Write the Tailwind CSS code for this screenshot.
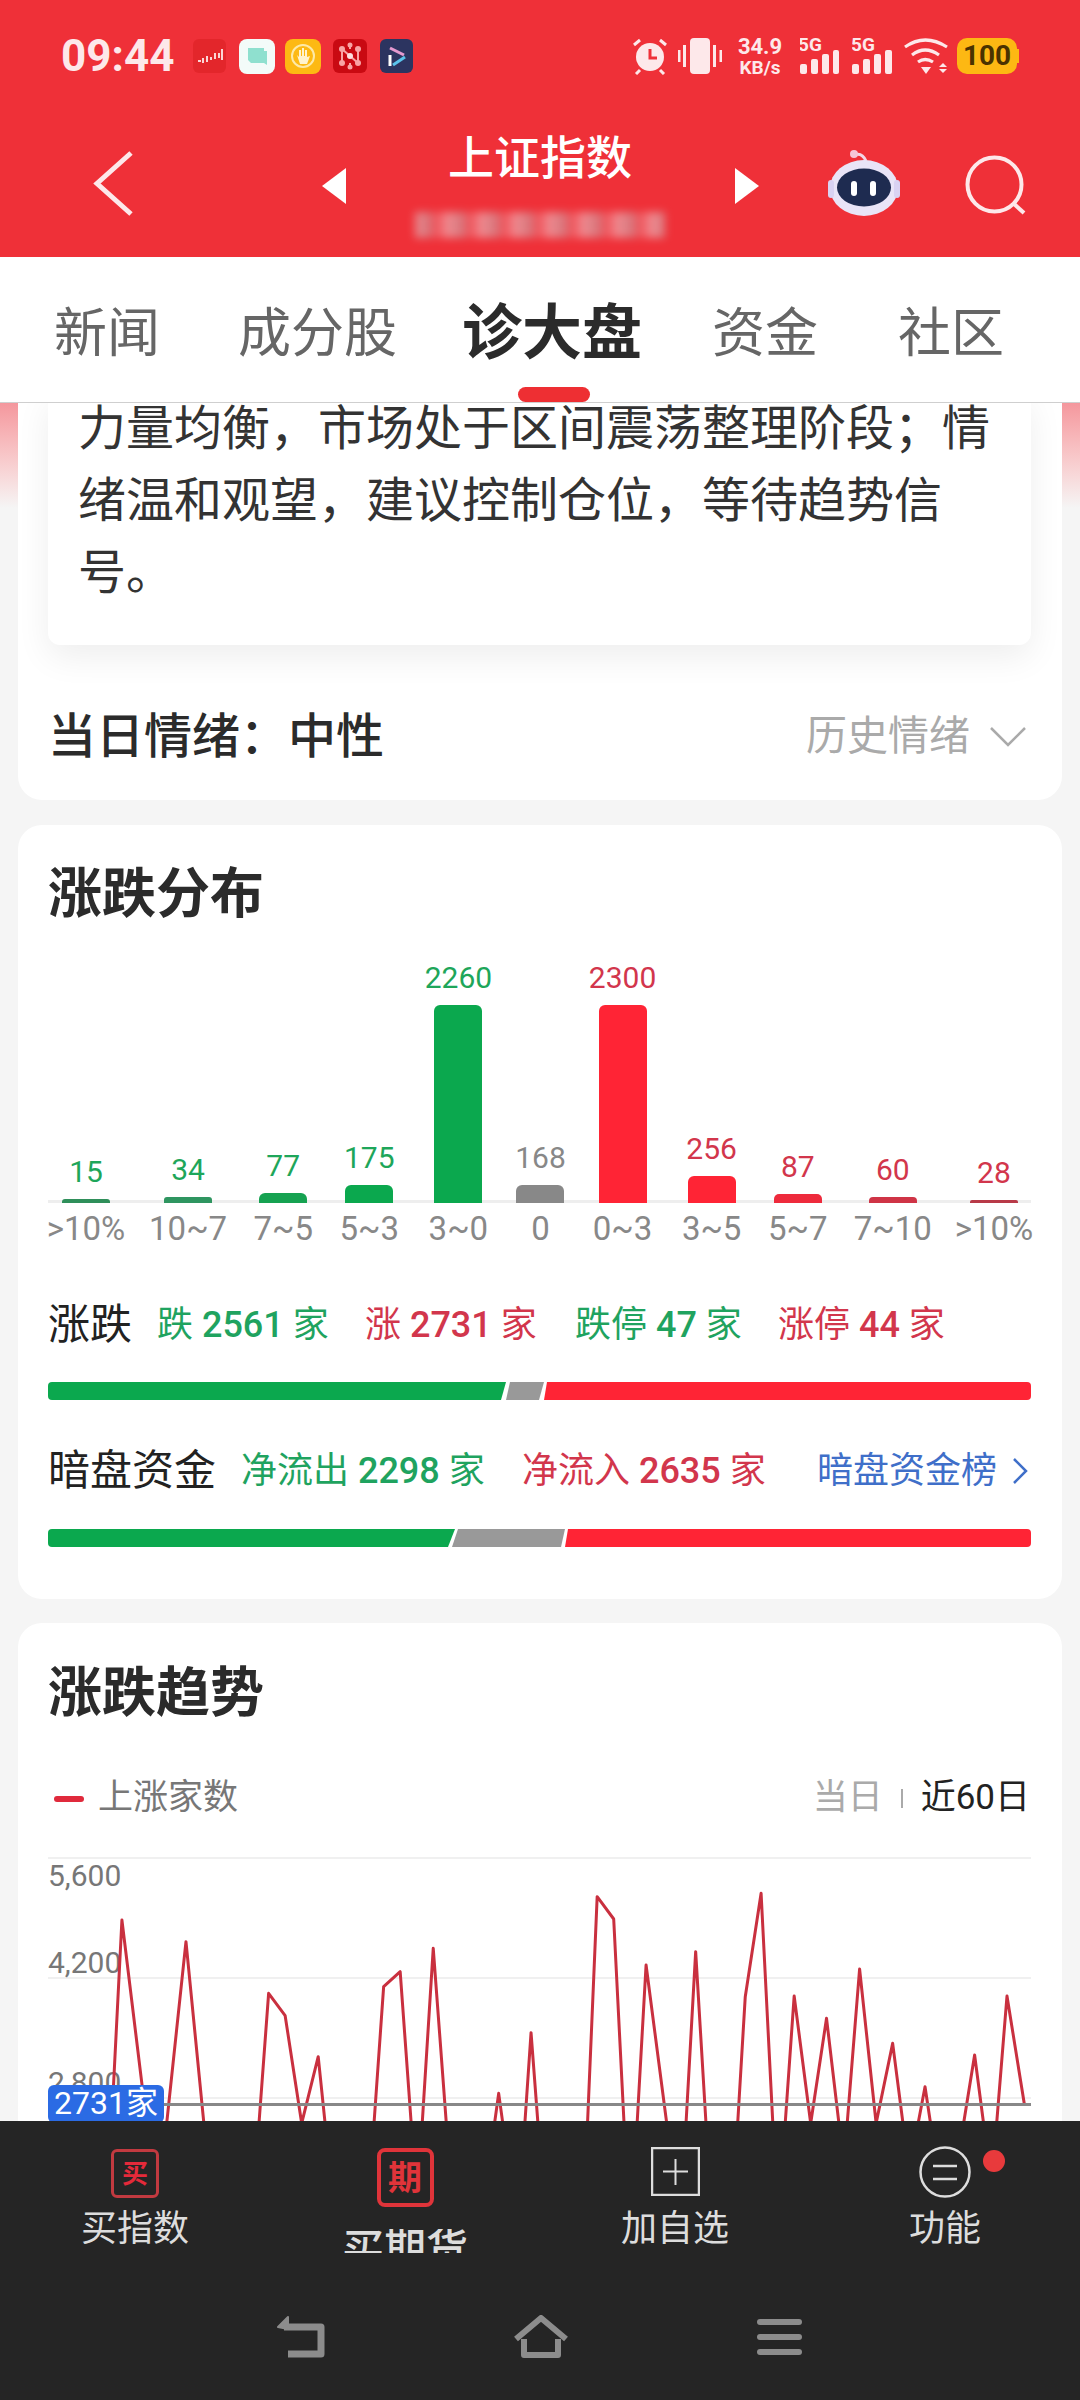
<!DOCTYPE html>
<html lang="zh"><head><meta charset="utf-8">
<script src="https://cdn.jsdelivr.net/npm/@tailwindcss/browser@4"></script>
</head>
<body class="m-0">
<div class="w-[1080px] h-[2400px] flex flex-col overflow-hidden bg-[#f5f5f5] text-[#2b2b2b] font-['Roboto','Noto_Sans_CJK_SC',sans-serif]">

<!-- header -->
<header class="h-[257px] shrink-0 bg-[#ef3038] flex flex-col text-[#fde8ea]">
  <div class="h-[78px] pt-[38px] pl-[61px] pr-[61px] flex justify-between items-start">
    <div class="flex items-center h-[36px]">
      <span class="text-[44px] leading-[36px] font-bold w-[132px]">09:44</span>
      <svg width="33" height="34" viewBox="0 0 33 34"><rect width="33" height="34" rx="6" fill="#e3262b"/><path d="M5 22h3M10 19v5M14 17v6M18 18v3M22 14v6M26 14v5M29 10v11" stroke="#fbd5d5" stroke-width="2"/></svg>
      <svg class="ml-[13px]" width="36" height="35" viewBox="0 0 36 35"><rect width="36" height="35" rx="8" fill="#f3fbf9"/><path d="M9 9h16v3h3v14l-3-2H12l-3-3z" fill="#8fe0cf"/></svg>
      <svg class="ml-[10px]" width="36" height="35" viewBox="0 0 36 35"><rect width="36" height="35" rx="8" fill="#fdb913"/><circle cx="18" cy="17" r="11" fill="none" stroke="#fde9a8" stroke-width="2"/><path d="M12 16l3 9h7l3-8-3 1v-7h-2v6h-1V9h-2v8h-1v-6h-2v7z" fill="#fff3cf"/></svg>
      <svg class="ml-[12px]" width="34" height="34" viewBox="0 0 34 34"><rect width="34" height="34" rx="6" fill="#c90a12"/><path d="M9 10v14M9 10l16 14M25 10v14M17 6v4M17 24v4" stroke="#f9a4a4" stroke-width="2"/><circle cx="9" cy="10" r="3" fill="#f9a4a4"/><circle cx="9" cy="24" r="3" fill="#f9a4a4"/><circle cx="25" cy="10" r="3" fill="#f9a4a4"/><circle cx="25" cy="24" r="3" fill="#f9a4a4"/><circle cx="17" cy="17" r="3" fill="#fde0e0"/><circle cx="17" cy="6" r="2.5" fill="#f9a4a4"/><circle cx="17" cy="28" r="2.5" fill="#f9a4a4"/></svg>
      <svg class="ml-[13px]" width="33" height="34" viewBox="0 0 33 34"><rect width="33" height="34" rx="6" fill="#2c3460"/><path d="M10 9l14 7" stroke="#e59ad0" stroke-width="3"/><path d="M10 16v11" stroke="#fff" stroke-width="3"/><path d="M13 26l12-8" stroke="#5ac4ec" stroke-width="3"/></svg>
    </div>
    <div class="flex items-start h-[37px] w-[387px] text-[#fde8ea]">
      <svg width="36" height="37" viewBox="0 0 36 37" fill="#fde8ea"><circle cx="18" cy="19" r="14"/><path d="M18 11v9h7" fill="none" stroke="#ef3038" stroke-width="3"/><path d="M2 7l6-5M34 7l-6-5M8 32l-4 4M28 32l4 4" stroke="#fde8ea" stroke-width="3" fill="none"/></svg>
      <svg class="ml-[10px]" width="44" height="36" viewBox="0 0 44 36" fill="#fde8ea"><rect x="12" width="20" height="36" rx="4"/><rect y="12" width="2.5" height="12"/><rect x="5" y="7" width="3" height="22"/><rect x="35" y="7" width="3" height="22"/><rect x="41.5" y="12" width="2.5" height="12"/></svg>
      <div class="ml-[15px] w-[46px] flex flex-col items-center font-bold"><span class="text-[22px] leading-[18px]">34.9</span><span class="text-[19px] leading-[19px] mt-[2px]">KB/s</span></div>
      <svg class="ml-[17px]" width="40" height="36" viewBox="0 0 40 36" fill="#fde8ea"><text x="-2" y="13" font-size="19" font-weight="700" font-family="Roboto">5G</text><rect y="26" width="7" height="10" rx="2"/><rect x="11" y="21" width="7" height="15" rx="2"/><rect x="22" y="16" width="7" height="20" rx="2"/><rect x="33" y="12" width="6" height="24" rx="2"/></svg>
      <svg class="ml-[12px]" width="42" height="36" viewBox="0 0 42 36" fill="#fde8ea"><text x="-1" y="13" font-size="19" font-weight="700" font-family="Roboto">5G</text><rect y="26" width="7" height="10" rx="2"/><rect x="11" y="21" width="7" height="15" rx="2"/><rect x="22" y="16" width="7" height="20" rx="2"/><rect x="33" y="12" width="7" height="24" rx="2"/></svg>
      <svg class="ml-[10px]" width="44" height="37" viewBox="0 0 44 37" fill="none" stroke="#fde8ea" stroke-width="3.2"><path d="M1 9Q21-5 43 9"/><path d="M8 17Q21 7 35 17"/><path d="M14 24Q21 19 29 24"/><path d="M17 29h10l-5 7z" fill="#fde8ea" stroke="none"/><path d="M35 29l4-4 4 4zM35 31l4 4 4-4z" fill="#fde8ea" stroke="none"/></svg>
      <div class="ml-[9px] flex items-center h-[36px]"><div class="w-[60px] h-[36px] rounded-[10px] bg-[#fdb813] text-[#4a3200] font-bold text-[28px] leading-[36px] text-center">100</div><div class="w-[2px] h-[14px] bg-[#fdb813]"></div></div>
    </div>
  </div>
  <div class="relative flex-1">
    <svg class="absolute left-0 top-0" width="1080" height="179" viewBox="0 78 1080 179" fill="none">
      <path d="M131 153L97 183.500L131 214" stroke="#fde8ea" stroke-width="5"/>
      <path d="M346 168V204L322 186z" fill="#fff"/>
      <path d="M735 168V204L759 186z" fill="#fff"/>
      <path d="M854 155q8-3 12 6" stroke="#f3d6e6" stroke-width="3"/><circle cx="854" cy="154" r="4" fill="#f6c6d8"/>
      <ellipse cx="864" cy="188" rx="34" ry="28" fill="#e9e4f7"/><rect x="828" y="180" width="6" height="18" rx="3" fill="#d9d2f2"/><rect x="894" y="180" width="6" height="18" rx="3" fill="#d9d2f2"/>
      <ellipse cx="864" cy="187.500" rx="27" ry="19" fill="#1e2b50"/>
      <rect x="851" y="181" width="6" height="15" rx="3" fill="#fff"/><rect x="870" y="181" width="6" height="15" rx="3" fill="#fff"/>
      <circle cx="994.500" cy="184.500" r="27" stroke="#fde8ea" stroke-width="4"/><path d="M1013 203l11 10" stroke="#fde8ea" stroke-width="4"/>
    </svg>
    <div class="pt-[50px] text-center text-white text-[46px] leading-[60px] font-medium">上证指数</div>
    <div class="mx-auto mt-[24px] w-[250px] h-[26px] blur-[4px] opacity-60 bg-[repeating-linear-gradient(90deg,#e8c4c8_0px,#c9a3a8_13px,#f2656c_21px,#f0d0d4_34px)]"></div>
  </div>
</header>

<!-- tabs -->
<nav class="relative h-[146px] shrink-0 bg-white border-b border-[#cfcfcf] flex items-center pl-[54px] pt-[8px] text-[#666] text-[53px] leading-[60px]">
  <span>新闻</span>
  <span class="ml-[78px]">成分股</span>
  <span class="ml-[65px] text-[60px] font-bold text-[#2b2b2b]">诊大盘</span>
  <span class="ml-[70px]">资金</span>
  <span class="ml-[80px]">社区</span>
  <div class="absolute left-[518px] bottom-0 w-[72px] h-[15px] rounded-[8px] bg-[#ee2f33]"></div>
</nav>

<!-- scrolling content -->
<main class="relative flex-1 overflow-hidden">
  <div class="absolute left-0 top-0 w-full h-[105px] bg-gradient-to-b from-[#f4979d] to-[#f5f5f5]"></div>

  <section class="relative mx-[18px] -mt-[10px] rounded-b-[24px] bg-white pb-[34px]">
    <div class="ml-[30px] mr-[31px] pl-[30px] pr-[30px] pb-[36px] rounded-b-[12px] bg-white shadow-[0_12px_34px_rgba(0,0,0,0.07)] text-[48px] leading-[72px] text-[#333]">力量均衡，市场处于区间震荡整理阶段；情绪温和观望，建议控制仓位，等待趋势信号。</div>
    <div class="mt-[63px] h-[58px] ml-[30px] mr-[34px] flex items-center justify-between">
      <span class="text-[48px] leading-[58px] font-medium">当日情绪：中性</span>
      <span class="flex items-center text-[#aaa] text-[41px] pr-[2px]">历史情绪<svg class="ml-[20px]" width="36" height="20" viewBox="0 0 36 20" fill="none"><path d="M1 1l17 17L35 1" stroke="#aaa" stroke-width="2.500"/></svg></span>
    </div>
  </section>

  <section class="relative mx-[18px] mt-[25px] rounded-[24px] bg-white pl-[30px] pr-[31px] pt-[40px] pb-[52px]">
    <h2 class="text-[54px] leading-[60px] font-bold">涨跌分布</h2>
    <div class="relative mt-[35px] h-[284px] flex justify-between items-end">
      <div class="absolute left-0 right-0 bottom-[41px] h-[3px] bg-[#eeeeee]"></div>
      <div class="relative w-[76px] flex flex-col items-center"><div class="w-0 flex justify-center text-[30px] leading-[30px] text-[#1ea65a] mb-[12px]">15</div><div class="w-[48px] h-[4px] rounded-t-[3px] bg-[#2f8f5a]"></div><div class="mt-[11px] text-[33px] leading-[30px] text-[#888] whitespace-nowrap">&gt;10%</div></div>
      <div class="relative w-[128px] flex flex-col items-center"><div class="w-0 flex justify-center text-[30px] leading-[30px] text-[#1ea65a] mb-[12px]">34</div><div class="w-[48px] h-[6px] rounded-t-[3px] bg-[#2f9560]"></div><div class="mt-[11px] text-[33px] leading-[30px] text-[#888] whitespace-nowrap">10~7</div></div>
      <div class="relative w-[62px] flex flex-col items-center"><div class="w-0 flex justify-center text-[30px] leading-[30px] text-[#1ea65a] mb-[12px]">77</div><div class="w-[48px] h-[10px] rounded-t-[6px] bg-[#16a251]"></div><div class="mt-[11px] text-[33px] leading-[30px] text-[#888] whitespace-nowrap">7~5</div></div>
      <div class="relative w-[110px] flex flex-col items-center"><div class="w-0 flex justify-center text-[30px] leading-[30px] text-[#1ea65a] mb-[12px]">175</div><div class="w-[48px] h-[18px] rounded-t-[6px] bg-[#0ba84e]"></div><div class="mt-[11px] text-[33px] leading-[30px] text-[#888] whitespace-nowrap">5~3</div></div>
      <div class="relative w-[68px] flex flex-col items-center"><div class="w-0 flex justify-center text-[30px] leading-[30px] text-[#1ea65a] mb-[12px]">2260</div><div class="w-[48px] h-[198px] rounded-t-[6px] bg-[#0ba84e]"></div><div class="mt-[11px] text-[33px] leading-[30px] text-[#888] whitespace-nowrap">3~0</div></div>
      <div class="relative w-[96px] flex flex-col items-center"><div class="w-0 flex justify-center text-[30px] leading-[30px] text-[#888] mb-[12px]">168</div><div class="w-[48px] h-[18px] rounded-t-[6px] bg-[#888]"></div><div class="mt-[11px] text-[33px] leading-[30px] text-[#888] whitespace-nowrap">0</div></div>
      <div class="relative w-[68px] flex flex-col items-center"><div class="w-0 flex justify-center text-[30px] leading-[30px] text-[#d2364c] mb-[12px]">2300</div><div class="w-[48px] h-[198px] rounded-t-[6px] bg-[#ff2435]"></div><div class="mt-[11px] text-[33px] leading-[30px] text-[#888] whitespace-nowrap">0~3</div></div>
      <div class="relative w-[110px] flex flex-col items-center"><div class="w-0 flex justify-center text-[30px] leading-[30px] text-[#d2364c] mb-[12px]">256</div><div class="w-[48px] h-[27px] rounded-t-[6px] bg-[#ff2435]"></div><div class="mt-[11px] text-[33px] leading-[30px] text-[#888] whitespace-nowrap">3~5</div></div>
      <div class="relative w-[62px] flex flex-col items-center"><div class="w-0 flex justify-center text-[30px] leading-[30px] text-[#d2364c] mb-[12px]">87</div><div class="w-[48px] h-[9px] rounded-t-[5px] bg-[#ee2a3c]"></div><div class="mt-[11px] text-[33px] leading-[30px] text-[#888] whitespace-nowrap">5~7</div></div>
      <div class="relative w-[128px] flex flex-col items-center"><div class="w-0 flex justify-center text-[30px] leading-[30px] text-[#d2364c] mb-[12px]">60</div><div class="w-[48px] h-[6px] rounded-t-[4px] bg-[#cf3446]"></div><div class="mt-[11px] text-[33px] leading-[30px] text-[#888] whitespace-nowrap">7~10</div></div>
      <div class="relative w-[74px] flex flex-col items-center"><div class="w-0 flex justify-center text-[30px] leading-[30px] text-[#d2364c] mb-[12px]">28</div><div class="w-[48px] h-[3px] rounded-t-[2px] bg-[#b83a48]"></div><div class="mt-[11px] text-[33px] leading-[30px] text-[#888] whitespace-nowrap">&gt;10%</div></div>
    </div>

    <div class="mt-[56px] h-[50px] flex items-center whitespace-nowrap text-[36px]">
      <span class="text-[42px] leading-[50px] text-[#222] w-[109px]">涨跌</span>
      <span class="text-[#1fa35f] w-[208px]">跌 <span class="font-medium">2561</span> 家</span>
      <span class="text-[#d2364c] w-[210px]">涨 <span class="font-medium">2731</span> 家</span>
      <span class="text-[#1fa35f] w-[203px]">跌停 <span class="font-medium">47</span> 家</span>
      <span class="text-[#d2364c]">涨停 <span class="font-medium">44</span> 家</span>
    </div>
    <svg class="block mt-[32px] rounded-[4px]" width="983" height="18" viewBox="48 0 983 18"><path d="M48 0H506L501 18H48z" fill="#0ba84e"/><path d="M510 0H544L539 18H506z" fill="#999"/><path d="M547 0H1031V18H544z" fill="#ff2435"/></svg>

    <div class="mt-[46px] h-[50px] flex items-center whitespace-nowrap text-[36px]">
      <span class="text-[42px] leading-[50px] text-[#222] w-[193px]">暗盘资金</span>
      <span class="text-[#1fa35f] w-[281px]">净流出 <span class="font-medium">2298</span> 家</span>
      <span class="text-[#d2364c] w-[295px]">净流入 <span class="font-medium">2635</span> 家</span>
      <span class="text-[#3f6fc9]">暗盘资金榜</span>
      <svg class="ml-[16px]" width="15" height="26" viewBox="0 0 15 26" fill="none"><path d="M1 1l12 12L1 25" stroke="#3f6fc9" stroke-width="2.500"/></svg>
    </div>
    <svg class="block mt-[33px] rounded-[4px]" width="983" height="18" viewBox="48 0 983 18"><path d="M48 0H455L448 18H48z" fill="#0ba84e"/><path d="M458 0H565L561 18H452z" fill="#999"/><path d="M568 0H1031V18H565z" fill="#ff2435"/></svg>
  </section>

  <section class="relative mx-[18px] mt-[24px] rounded-t-[24px] bg-white pl-[30px] pr-[31px] pt-[41px] pb-[40px]">
    <h2 class="text-[54px] leading-[60px] font-bold">涨跌趋势</h2>
    <div class="mt-[52px] h-[40px] pt-[5px] flex items-center justify-between">
      <div class="flex items-center text-[35px] text-[#777]"><span class="ml-[6px] w-[30px] h-[6px] rounded-[3px] bg-[#e02a3c]"></span><span class="ml-[14px]">上涨家数</span></div>
      <div class="flex items-center text-[35px] pr-[1px]"><span class="text-[#aaa]">当日</span><span class="mx-[18px] w-[2px] h-[19px] bg-[#aaa]"></span><span class="text-[#222]">近60日</span></div>
    </div>
    <div class="relative h-[320px]">
      <div class="absolute left-0 right-0 top-[41px] h-[2px] bg-[#f0f0f0]"></div>
      <div class="absolute left-0 right-0 top-[161px] h-[2px] bg-[#f0f0f0]"></div>
      <div class="absolute left-0 right-0 top-[281px] h-[2px] bg-[#f0f0f0]"></div>
      <div class="absolute left-0 top-[45px] text-[30px] leading-[30px] text-[#777]">5,600</div>
      <div class="absolute left-0 top-[132px] text-[30px] leading-[30px] text-[#777]">4,200</div>
      <div class="absolute left-0 top-[252px] text-[30px] leading-[30px] text-[#777]">2,800</div>
      <svg class="absolute left-[-48px] top-[-196px] overflow-visible" width="1080" height="520" viewBox="0 0 1568 1560" preserveAspectRatio="none" fill="none">
        <path vector-effect="non-scaling-stroke" stroke="#c9303f" stroke-width="3" stroke-linejoin="round" d="M162 1510L177 900L213 1510M242 1510L270 965L296 1510M376 1510L390 1120L414 1187L438 1510L462 1310L472 1510M543 1510L557 1100L581 1055L597 1510M613 1510L629 985L648 1510M718 1510L724 1420L730 1510M762 1510L771 1238L781 1510M853 1510L867 830L891 897L906 1510M925 1510L938 1035L968 1510M996 1510L1010 995L1025 1510M1071 1510L1082 1130L1105 820L1122 1510M1140 1510L1153 1128L1177 1510L1200 1195L1218 1510M1230 1510L1248 1047L1272 1510L1296 1270L1311 1510M1333 1510L1343 1400L1351 1510M1399 1510L1415 1305L1428 1510M1447 1510L1462 1128L1487 1450"/>
      </svg>
      <div class="absolute left-[115px] right-0 top-[287px] h-[3px] bg-[#888]"></div>
      <div class="absolute left-0 top-[269px] w-[116px] h-[38px] rounded-[6px] bg-[#2b6be4] text-white text-[32px] leading-[36px] text-center whitespace-nowrap">2731家</div>
    </div>
  </section>
</main>

<!-- footer -->
<footer class="h-[279px] shrink-0 bg-[#252525] text-[#ddd] flex flex-col">
  <div class="h-[179px] grid grid-cols-4">
    <div class="flex flex-col items-center pt-[28px]">
      <div class="w-[48px] h-[49px] rounded-[6px] border-[3px] border-[#c23a40] flex items-center justify-center text-[#e52a3a] text-[26px] leading-[26px] font-bold">买</div>
      <div class="mt-[11px] text-[36px] leading-[40px]">买指数</div>
    </div>
    <div class="flex flex-col items-center pt-[27px]">
      <div class="w-[57px] h-[59px] rounded-[8px] border-[4px] border-[#e0343a] flex items-center justify-center text-[#e0343a] text-[34px] leading-[34px] font-bold">期</div>
      <div class="mt-[22px] h-[24px] overflow-hidden text-[42px] leading-[42px] font-medium">买期货</div>
    </div>
    <div class="flex flex-col items-center pt-[26px]">
      <svg width="49" height="49" viewBox="0 0 49 49" fill="none" stroke="#ddd"><rect x="1" y="1" width="47" height="47" stroke-width="2.500"/><path d="M24.500 12v26M12 24.500h25" stroke-width="2"/></svg>
      <div class="mt-[13px] text-[36px] leading-[40px]">加自选</div>
    </div>
    <div class="relative flex flex-col items-center pt-[25px]">
      <svg width="52" height="52" viewBox="0 0 52 52" fill="none" stroke="#ddd"><circle cx="26" cy="26" r="24.500" stroke-width="2.500"/><path d="M14 20h24M14 33h24" stroke-width="2.500"/></svg>
      <div class="mt-[11px] text-[36px] leading-[40px]">功能</div>
      <div class="absolute left-[173px] top-[29px] w-[22px] h-[22px] rounded-full bg-[#e83a3c]"></div>
    </div>
  </div>
  <div class="mt-[15px] flex justify-center gap-[188px] pr-[3px]">
    <svg width="49" height="44" viewBox="0 0 49 44" fill="none" stroke="#8c8c8c" stroke-width="7" stroke-linejoin="round"><path d="M8 12H45V39H12"/><path d="M12 2L2 12l10 2z" fill="#8c8c8c" stroke-width="2"/></svg>
    <svg width="56" height="44" viewBox="0 0 56 44" fill="none" stroke="#8c8c8c" stroke-width="6" stroke-linejoin="round"><path d="M3 24L28 3l25 21"/><path d="M11 24V40H45V24"/></svg>
    <svg width="45" height="44" viewBox="0 0 45 44" fill="#8c8c8c"><rect y="4" width="45" height="6" rx="3"/><rect y="19" width="45" height="6" rx="3"/><rect y="34" width="45" height="6" rx="3"/></svg>
  </div>
</footer>
</div>
</body></html>
